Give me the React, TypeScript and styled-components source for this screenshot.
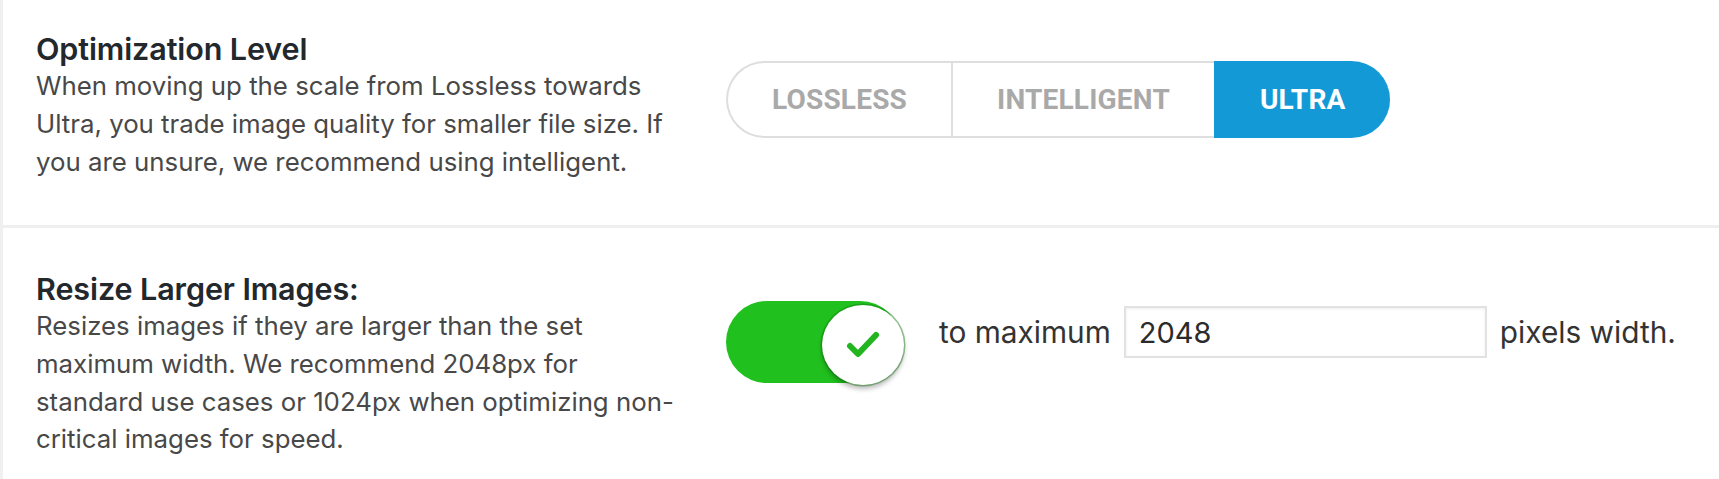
import React from "react";
import styled, { createGlobalStyle } from "styled-components";

const Global = createGlobalStyle`
  html, body { margin: 0; padding: 0; background: #fff; }
  body { font-family: Inter, "Noto Sans", sans-serif; }
`;

const Panel = styled.div`
  border-left: 3px solid #f0f0f0;
  min-height: 479px;
  box-sizing: border-box;
`;

const Row = styled.section<{ $top: number; $height: number; $divider?: boolean }>`
  display: grid;
  grid-template-columns: 648px 1fr;
  column-gap: 42px;
  align-items: start;
  box-sizing: border-box;
  height: ${(p) => p.$height}px;
  padding: ${(p) => p.$top}px 0 0 33px;
  border-bottom: ${(p) => (p.$divider ? "3px solid #efefef" : "none")};
`;

const Info = styled.div`
  display: flex;
  flex-direction: column;
`;

const Title = styled.h3`
  margin: 0;
  font-size: 30.5px;
  line-height: 37px;
  font-weight: 600;
  letter-spacing: -0.1px;
  color: #23282d;
`;

const Desc = styled.p`
  margin: 0;
  font-size: 25.8px;
  line-height: 37.8px;
  color: #484848;
`;

const Controls = styled.div`
  margin-top: 31px;
  display: flex;
  align-items: flex-start;
`;

const Segmented = styled.div`
  display: inline-flex;
  height: 77px;
`;

const Option = styled.button<{ $active?: boolean; $first?: boolean; $last?: boolean }>`
  box-sizing: border-box;
  height: 77px;
  margin: 0;
  padding: 0 44px;
  font-family: Roboto, "Liberation Sans", sans-serif;
  font-weight: 700;
  font-size: 28px;
  letter-spacing: 0.2px;
  text-transform: uppercase;
  cursor: pointer;
  background: ${(p) => (p.$active ? "#139ad6" : "#fff")};
  color: ${(p) => (p.$active ? "#fff" : "#a9a9a9")};
  border: 2px solid ${(p) => (p.$active ? "#139ad6" : "#dedede")};
  border-right: none;
  border-radius: ${(p) => (p.$first ? "40px 0 0 40px" : p.$last ? "0 40px 40px 0" : "0")};
`;

const ToggleTrack = styled.button`
  position: relative;
  box-sizing: border-box;
  width: 175px;
  height: 82px;
  padding: 0;
  border: none;
  border-radius: 41px;
  background: #20c11e;
  cursor: pointer;
  flex-shrink: 0;
`;

const Knob = styled.span`
  position: absolute;
  right: -3px;
  top: 4px;
  width: 82px;
  height: 80px;
  border-radius: 50%;
  background: #fff;
  box-shadow: 0 0 0 1.5px rgba(20, 120, 20, 0.45), 0 4px 5px rgba(0, 0, 0, 0.28);
  display: flex;
  align-items: center;
  justify-content: center;
`;

const Field = styled.div`
  margin-top: 5px;
  margin-left: 38px;
  height: 52px;
  display: flex;
  align-items: center;
  gap: 13px;
  font-size: 29.8px;
  color: #333;
`;

const NumberInput = styled.input`
  box-sizing: border-box;
  width: 363px;
  height: 52px;
  border: 2px solid #e2e2e2;
  box-shadow: inset 0 1px 3px rgba(0, 0, 0, 0.07);
  padding: 0 13px;
  font-family: Inter, "Noto Sans", sans-serif;
  font-size: 29px;
  color: #2b2b2b;
  outline: none;
`;

export default function App() {
  const levels = ["Lossless", "Intelligent", "Ultra"];
  return (
    <>
      <Global />
      <Panel>
        <Row $top={30} $height={228} $divider>
          <Info>
            <Title>Optimization Level</Title>
            <Desc>
              When moving up the scale from Lossless towards Ultra, you trade image quality for smaller
              file size. If you are unsure, we recommend using intelligent.
            </Desc>
          </Info>
          <Controls>
            <Segmented>
              {levels.map((l, i) => (
                <Option key={l} $first={i === 0} $last={i === levels.length - 1} $active={i === 2}>
                  {l}
                </Option>
              ))}
            </Segmented>
          </Controls>
        </Row>
        <Row $top={42} $height={251}>
          <Info>
            <Title>Resize Larger Images:</Title>
            <Desc>
              Resizes images if they are larger than the set maximum width. We recommend 2048px for
              standard use cases or 1024px when optimizing non-critical images for speed.
            </Desc>
          </Info>
          <Controls>
            <ToggleTrack aria-label="Resize larger images">
              <Knob>
                <svg width="34" height="30" viewBox="0 0 34 30">
                  <polyline
                    points="4,16 12,24 30,5"
                    fill="none"
                    stroke="#22b51f"
                    strokeWidth="6"
                    strokeLinecap="round"
                    strokeLinejoin="round"
                  />
                </svg>
              </Knob>
            </ToggleTrack>
            <Field>
              <span>to maximum</span>
              <NumberInput defaultValue="2048" />
              <span>pixels width.</span>
            </Field>
          </Controls>
        </Row>
      </Panel>
    </>
  );
}
